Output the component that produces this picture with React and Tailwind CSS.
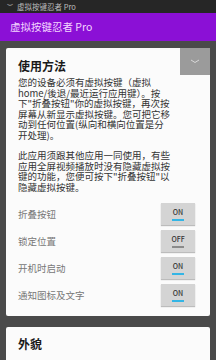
import React from "react";

const font = { fontFamily: '"Noto Sans CJK SC", "Noto Sans", sans-serif' };

const Toggle = ({ on }) => (
  <div className="w-[34px] h-[22px] bg-[#d4d4d4] flex flex-col items-center justify-center shadow-[0_1px_1px_rgba(0,0,0,0.25)]">
    <span className="text-[7px] leading-[9px] text-[#333] font-medium">{on ? "ON" : "OFF"}</span>
    <span className={`mt-[2px] w-[12px] h-[2px] ${on ? "bg-[#33b5e5]" : "bg-[#8a8a8a]"}`} />
  </div>
);

const rows = [
  { label: "折叠按钮", on: true },
  { label: "锁定位置", on: false },
  { label: "开机时启动", on: true },
  { label: "通知图标及文字", on: true },
];

export default function App() {
  return (
    <div className="w-[216px] h-[360px] bg-[#4a4a4a] overflow-hidden" style={font}>
      <div className="h-[13px] bg-[#262626] flex items-center pl-[7px] gap-[4px] text-[7.5px] text-[#bdbdbd]">
        <span className="text-[6px]">︶</span>
        <span>虚拟按键忍者 Pro</span>
      </div>
      <div className="h-[28px] bg-[#8b10d6] flex items-center pl-[10px] text-[10.5px] text-[#f3d6ff]">
        虚拟按键忍者 Pro
      </div>
      <div className="px-[6px] pt-[7px] flex flex-col gap-[11px]">
        <div className="bg-[#fbfbfb] rounded-[2px] h-[268px] flex flex-col">
          <div className="flex justify-between">
            <div className="pl-[12px] pt-[10px] text-[12px] leading-[16px] font-bold text-[#1a1a1a]">使用方法</div>
            <div className="w-[30px] h-[27px] bg-[#9b9b9b] flex items-center justify-center">
              <svg width="10" height="5" viewBox="0 0 10 5">
                <path d="M1 1 L5 3.5 L9 1" stroke="#d8d8d8" strokeWidth="1" fill="none" />
              </svg>
            </div>
          </div>
          <div className="pl-[12px] pt-[2px] text-[9.5px] leading-[10.5px] text-[#333]">
            <p>
              您的设备必须有虚拟按键（虚拟<br />
              home/後退/最近运行应用键）。按<br />
              下"折叠按钮"你的虚拟按键，再次按<br />
              屏幕从新显示虚拟按键。您可把它移<br />
              动到任何位置(纵向和横向位置是分<br />
              开处理)。
            </p>
            <p className="mt-[10px]">
              此应用须跟其他应用一同使用，有些<br />
              应用全屏视频播放时没有隐藏虚拟按<br />
              键的功能，您便可按下"折叠按钮"以<br />
              隐藏虚拟按键。
            </p>
          </div>
          <div className="mt-[11px] flex flex-col gap-[5px] pl-[12px] pr-[15px]">
            {rows.map((r) => (
              <div key={r.label} className="flex items-center justify-between">
                <span className="text-[9.5px] text-[#777]">{r.label}</span>
                <Toggle on={r.on} />
              </div>
            ))}
          </div>
        </div>
        <div className="bg-[#fbfbfb] rounded-[2px] h-[40px] pl-[12px] pt-[9px]">
          <div className="text-[12px] leading-[16px] font-bold text-[#1a1a1a]">外貌</div>
        </div>
      </div>
    </div>
  );
}
